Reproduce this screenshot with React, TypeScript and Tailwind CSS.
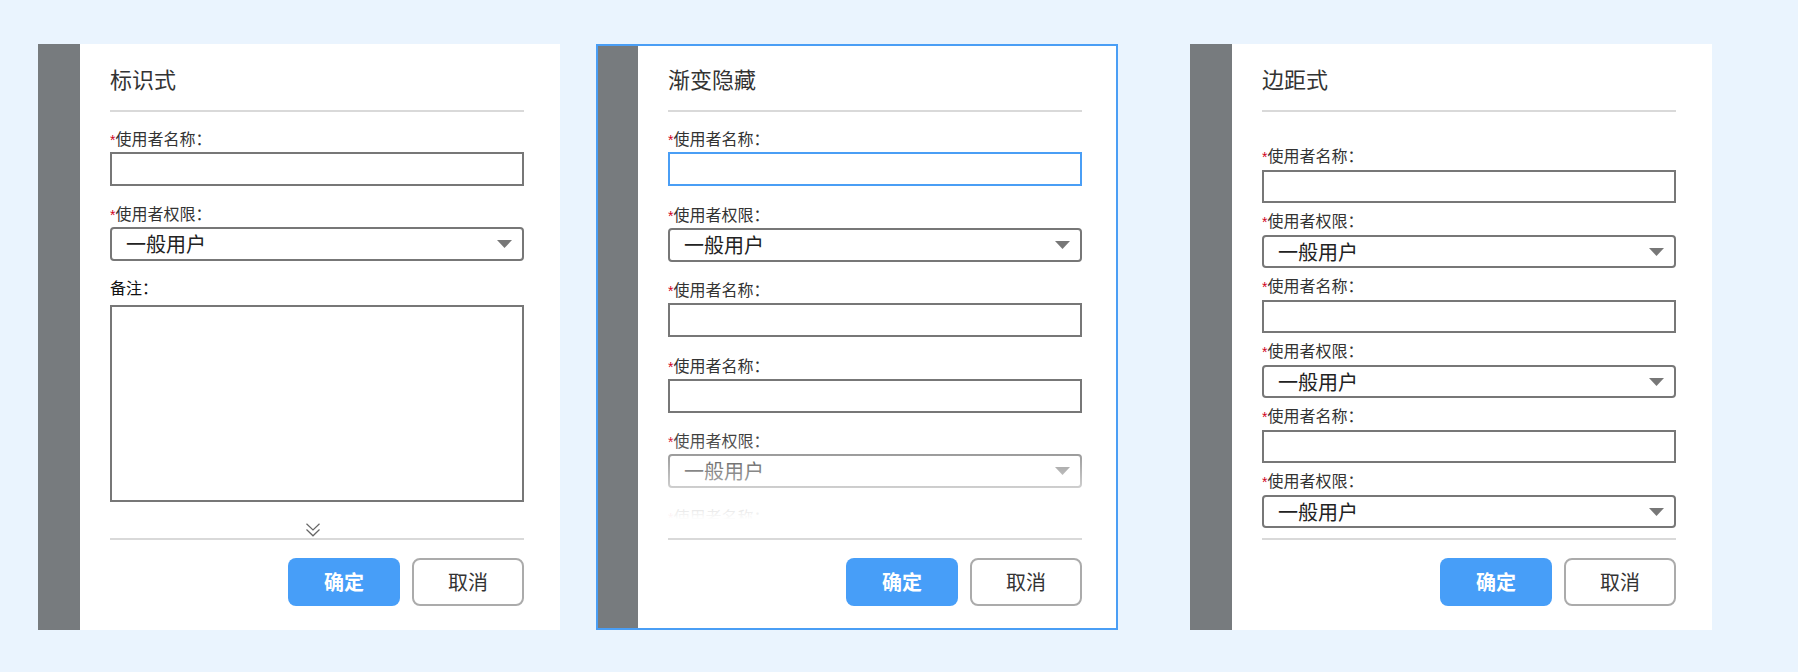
import type { ReactNode } from 'react';

const FONT = "font-['Noto_Sans_CJK_SC','Liberation_Sans',sans-serif]";

function Label({ text, required = true, dark = false }: { text: string; required?: boolean; dark?: boolean }) {
  return (
    <div className={`h-[20px] leading-[18px] text-[16px] whitespace-nowrap ${dark ? 'text-[#111]' : 'text-[#333]'}`}>
      {required && <span className="font-['Liberation_Sans',sans-serif] text-[14px] text-[#d0021b]">*</span>}
      {text}：
    </div>
  );
}

function TextBox({ h = 'h-[34px]', focused = false }: { h?: string; focused?: boolean }) {
  return (
    <div className={`${h} w-full border-2 bg-white ${focused ? 'border-[#4a9ef5]' : 'border-[#777]'}`} />
  );
}

function SelectBox({ h = 'h-[34px]' }: { h?: string }) {
  return (
    <div className={`${h} w-full border-2 border-[#777] rounded-[4px] bg-white flex items-center justify-between pl-[14px] pr-[10px]`}>
      <span className="text-[20px] leading-none text-[#222]">一般用户</span>
      <svg width="15" height="8" viewBox="0 0 15 8">
        <polygon points="0,0 15,0 7.5,8" fill="#777" />
      </svg>
    </div>
  );
}

function Card({
  title,
  selected = false,
  children,
}: {
  title: string;
  selected?: boolean;
  children: ReactNode;
}) {
  return (
    <div
      className={`flex h-[586px] w-[522px] shrink-0 bg-white ${selected ? 'border-2 border-[#4a9ef5]' : ''}`}
    >
      <div className={`${selected ? 'w-[40px]' : 'w-[42px]'} shrink-0 bg-[#777b7e]`} />
      <div className={`flex-1 min-w-0 flex flex-col pl-[30px] ${selected ? 'pr-[34px]' : 'pr-[36px]'}`}>
        {/* header */}
        <div className={selected ? 'pt-[17px]' : 'pt-[19px]'}>
          <div className="h-[30px] leading-[30px] text-[22px] text-[#333]">{title}</div>
          <div className="mt-[17px] h-[2px] bg-[#d9d9d9]" />
        </div>

        {/* body */}
        <div className="flex-1 min-h-0 relative overflow-hidden">{children}</div>

        {/* footer */}
        <div className={selected ? 'pb-[22px]' : 'pb-[24px]'}>
          <div className="h-[2px] bg-[#d9d9d9]" />
          <div className="mt-[18px] flex justify-end gap-[12px]">
            <button className="h-[48px] w-[112px] rounded-[8px] bg-[#479ef8] text-[20px] font-semibold text-white">
              确定
            </button>
            <button className="h-[48px] w-[112px] rounded-[8px] border-2 border-[#ababab] bg-white text-[20px] text-[#333]">
              取消
            </button>
          </div>
        </div>
      </div>
    </div>
  );
}

function ChevronsDown() {
  return (
    <svg width="14" height="14" viewBox="0 0 14 14" fill="none" stroke="#666" strokeWidth="1.2">
      <polyline points="0.5,0.8 7,7 13.5,0.8" />
      <polyline points="0.5,6.5 7,12.8 13.5,6.5" />
    </svg>
  );
}

export default function App() {
  const fadeFields: { label: string; kind: 'input' | 'select'; focused?: boolean }[] = [
    { label: '使用者名称', kind: 'input', focused: true },
    { label: '使用者权限', kind: 'select' },
    { label: '使用者名称', kind: 'input' },
    { label: '使用者名称', kind: 'input' },
    { label: '使用者权限', kind: 'select' },
    { label: '使用者名称', kind: 'input' },
  ];

  const marginFields: { label: string; kind: 'input' | 'select' }[] = [
    { label: '使用者名称', kind: 'input' },
    { label: '使用者权限', kind: 'select' },
    { label: '使用者名称', kind: 'input' },
    { label: '使用者权限', kind: 'select' },
    { label: '使用者名称', kind: 'input' },
    { label: '使用者权限', kind: 'select' },
  ];

  return (
    <div className={`${FONT} h-[672px] w-full bg-[#eaf4fe] flex items-start pt-[44px] pl-[38px]`}>
      {/* 标识式 */}
      <Card title="标识式">
        <div className="pt-[17px]">
          <Label text="使用者名称" />
          <div className="mt-[3px]">
            <TextBox />
          </div>
          <div className="mt-[18px]">
            <Label text="使用者权限" />
          </div>
          <div className="mt-[3px]">
            <SelectBox />
          </div>
          <div className="mt-[17px]">
            <Label text="备注" required={false} dark />
          </div>
          <div className="mt-[7px] h-[197px] border-2 border-[#777] bg-white" />
          <div className="mt-[21px] flex justify-center pr-[8px]">
            <ChevronsDown />
          </div>
        </div>
      </Card>

      {/* 渐变隐藏 */}
      <div className="ml-[36px]">
        <Card title="渐变隐藏" selected>
          <div className="pt-[17px]">
            {fadeFields.map((f, i) => (
              <div key={i} className="mb-[18.5px]">
                <Label text={f.label} />
                <div className="mt-[3px]">
                  {f.kind === 'input' ? <TextBox focused={f.focused} /> : <SelectBox />}
                </div>
              </div>
            ))}
          </div>
          <div className="absolute left-0 right-0 bottom-0 h-[108px] bg-[linear-gradient(to_bottom,rgba(255,255,255,0)_0%,#fff_83%)]" />
        </Card>
      </div>

      {/* 边距式 */}
      <div className="ml-[72px]">
        <Card title="边距式">
          <div className="pt-[34px] flex flex-col gap-[8px]">
            {marginFields.map((f, i) => (
              <div key={i}>
                <Label text={f.label} />
                <div className="mt-[4px]">
                  {f.kind === 'input' ? <TextBox h="h-[33px]" /> : <SelectBox h="h-[33px]" />}
                </div>
              </div>
            ))}
          </div>
        </Card>
      </div>
    </div>
  );
}
